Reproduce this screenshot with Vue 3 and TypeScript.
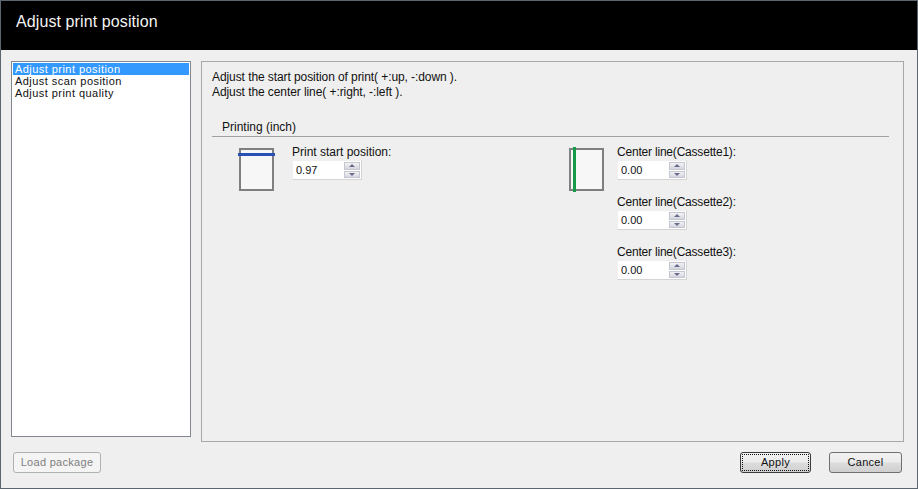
<script setup lang="ts">
const menuItems = ['Adjust print position', 'Adjust scan position', 'Adjust print quality']
const cassettes = [1, 2, 3]
</script>

<template>
  <div class="window">
    <header class="title-bar">Adjust print position</header>
    <main class="body">
      <ul class="menu">
        <li v-for="(item, index) in menuItems" :key="item" :class="{ selected: index === 0 }">{{ item }}</li>
      </ul>
      <section class="panel">
        <p class="hint">Adjust the start position of print( +:up, -:down ).</p>
        <p class="hint">Adjust the center line( +:right, -:left ).</p>
        <h2 class="group-title">Printing (inch)</h2>
        <div class="columns">
          <div class="column start-column">
            <svg class="sheet" width="40" height="46" viewBox="0 0 40 46">
              <rect x="2" y="2" width="33" height="41" fill="#f7f7f7" stroke="#7f7f7f" stroke-width="2" />
              <rect x="0" y="6" width="37" height="3" fill="#2a4fb5" />
            </svg>
            <div class="field">
              <label>Print start position:</label>
              <div class="spinner">
                <span class="value">0.97</span>
                <span class="arrows"><i class="up"></i><i class="down"></i></span>
              </div>
            </div>
          </div>
          <div class="column center-column">
            <svg class="sheet" width="40" height="46" viewBox="0 0 40 46">
              <rect x="1" y="2" width="33" height="41" fill="#f7f7f7" stroke="#7f7f7f" stroke-width="2" />
              <rect x="4" y="0" width="3" height="45" fill="#159a48" />
            </svg>
            <div class="fields">
              <div v-for="n in cassettes" :key="n" class="field">
                <label>Center line(Cassette{{ n }}):</label>
                <div class="spinner">
                  <span class="value">0.00</span>
                  <span class="arrows"><i class="up"></i><i class="down"></i></span>
                </div>
              </div>
            </div>
          </div>
        </div>
      </section>
    </main>
    <footer class="actions">
      <button class="btn load" disabled>Load package</button>
      <div class="right-actions">
        <button class="btn apply">Apply</button>
        <button class="btn cancel">Cancel</button>
      </div>
    </footer>
  </div>
</template>

<style>
html, body {
  margin: 0;
  overflow: hidden;
}
</style>

<style scoped>
.window {
  box-sizing: border-box;
  width: 918px;
  height: 489px;
  border: 1px solid #5b6670;
  background: #efefef;
  font-family: "Liberation Sans", Arial, sans-serif;
  font-size: 12px;
  line-height: 12px;
  color: #111;
  display: flex;
  flex-direction: column;
}
.title-bar {
  height: 49px;
  background: #000;
  color: #f4f4f4;
  font-size: 16px;
  letter-spacing: 0.1px;
  line-height: 42px;
  padding-left: 15px;
  flex: none;
}
.body {
  display: flex;
  align-items: flex-start;
  padding: 11px 13px 0 10px;
  gap: 10px;
  height: 392px;
  box-sizing: border-box;
  flex: none;
}
.menu {
  list-style: none;
  margin: 0;
  padding: 1px;
  width: 180px;
  height: 376px;
  box-sizing: border-box;
  background: #fff;
  border: 1px solid #828790;
  flex: none;
  font-size: 11px;
  letter-spacing: 0.45px;
}
.menu li {
  height: 12px;
  padding-left: 2px;
  line-height: 12px;
}
.menu li.selected {
  background: #3399ff;
  color: #fff;
}
.panel {
  flex: 1;
  height: 381px;
  box-sizing: border-box;
  border: 1px solid #a8a8a8;
  padding: 9px 14px 0 10px;
}
.hint {
  margin: 0;
  height: 15px;
  line-height: 13px;
  letter-spacing: -0.08px;
}
.group-title {
  margin: 19px 0 0;
  height: 16px;
  padding-left: 10px;
  font-size: 12px;
  font-weight: normal;
  line-height: 14px;
  border-bottom: 1px solid #a0a0a0;
}
.columns {
  display: flex;
  padding-top: 8px;
}
.column {
  display: flex;
  align-items: flex-start;
}
.start-column {
  width: 357px;
  padding-left: 26px;
  box-sizing: border-box;
}
.sheet {
  flex: none;
  display: block;
  margin-top: 2px;
}
.start-column .field {
  margin-left: 14px;
}
.center-column .fields {
  margin-left: 8px;
  display: flex;
  flex-direction: column;
  gap: 15px;
}
.center-column label {
  letter-spacing: -0.2px;
}
.field label {
  display: block;
  height: 14px;
  line-height: 15px;
  margin-bottom: 1px;
}
.spinner {
  width: 70px;
  height: 20px;
  box-sizing: border-box;
  background: #fff;
  border: 1px solid #efefef;
  border-right-color: #d4d4d4;
  border-bottom-color: #d4d4d4;
  display: flex;
  align-items: center;
  justify-content: space-between;
  padding: 0 1px 0 3px;
  font-size: 11px;
}
.value {
  line-height: 16px;
}
.arrows {
  width: 16px;
  height: 16px;
  display: flex;
  flex-direction: column;
  gap: 1px;
}
.arrows i {
  flex: 1;
  background: linear-gradient(#f2f2f5, #d4d6e0);
  border: 1px solid #c4c6d0;
  box-sizing: border-box;
  display: flex;
  align-items: center;
  justify-content: center;
}
.arrows i::after {
  content: "";
  width: 0;
  height: 0;
  border-left: 3px solid transparent;
  border-right: 3px solid transparent;
}
.arrows .up::after {
  border-bottom: 3px solid #6a6a8a;
}
.arrows .down::after {
  border-top: 3px solid #6a6a8a;
}
.actions {
  flex: 1;
  display: flex;
  justify-content: space-between;
  align-items: flex-start;
  padding: 10px 15px 0 12px;
}
.right-actions {
  display: flex;
  gap: 18px;
}
.btn {
  height: 21px;
  padding: 0 0 2px;
  font: inherit;
  font-size: 11px;
  letter-spacing: 0.3px;
  color: #111;
  border: 1px solid #707070;
  border-radius: 3px;
  background: linear-gradient(#f2f2f2 0%, #ebebeb 48%, #dddddd 52%, #cfcfcf 100%);
}
.load {
  width: 88px;
  color: #7f7f7f;
  border-color: #adb2b5;
  background: #f4f4f4;
}
.apply {
  width: 71px;
  border-color: #3c3c3c;
  outline: 1px dotted #111;
  outline-offset: -3px;
}
.cancel {
  width: 73px;
}
</style>
